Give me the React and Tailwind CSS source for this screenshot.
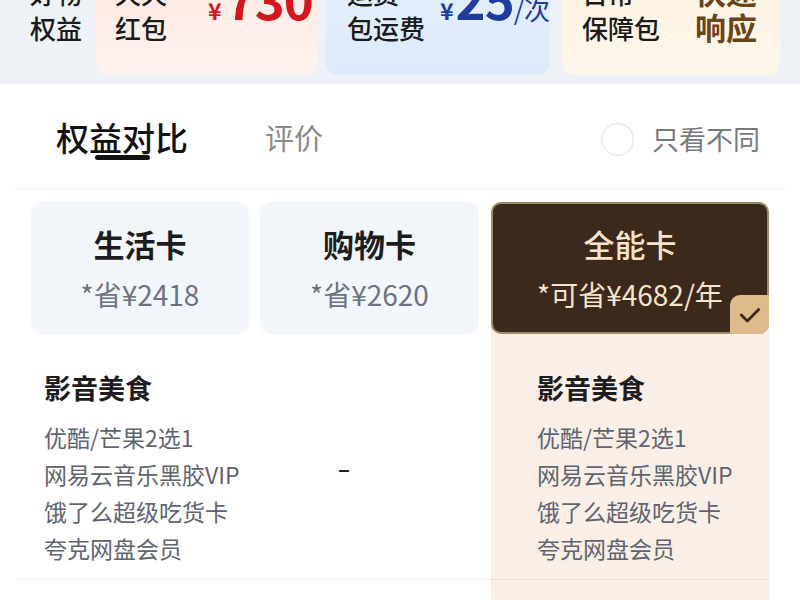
import React, { useState } from 'react';

const font = { fontFamily: '"Noto Sans CJK SC", "Noto Sans", sans-serif' };

const perks = ['优酷/芒果2选1', '网易云音乐黑胶VIP', '饿了么超级吃货卡', '夸克网盘会员'];

const cards = [
  { name: '生活卡', save: '*省¥2418' },
  { name: '购物卡', save: '*省¥2620' },
];

const Banner = () => {
  return (
    <div className="h-[84px] overflow-hidden bg-[#eef2f7]">
      <div className="-mt-[44px] flex h-[119px] items-start">
        <div className="ml-[30px] w-[66px] pt-[19px] text-[26px] font-medium leading-[35px] text-[#1b1b1b]">
          <div>好物</div>
          <div>权益</div>
        </div>
        <div className="flex h-[119px] w-[222px] items-start rounded-[12px] bg-gradient-to-b from-[#fde6e0] to-[#fff3ee] pl-[19px]">
          <div className="w-[93px] pt-[19px] text-[26px] font-medium leading-[35px] text-[#1b1b1b]">
            <div>天天</div>
            <div>红包</div>
          </div>
          <div className="flex items-baseline whitespace-nowrap pt-[12px] font-bold text-[#d3161e]">
            <span className="text-[23px]">¥</span>
            <span className="ml-[4px] text-[51px] leading-[60px] tracking-[-1px]">730</span>
          </div>
        </div>
        <div className="ml-[8px] flex h-[119px] w-[224px] items-start rounded-[12px] bg-gradient-to-b from-[#e6f0fd] to-[#ddeafb] pl-[21px]">
          <div className="w-[96px] pt-[19px] text-[26px] font-medium leading-[35px] text-[#1b1b1b]">
            <div>运费</div>
            <div>包运费</div>
          </div>
          <div className="flex items-baseline whitespace-nowrap pt-[12px] text-[#1d3c9c]">
            <span className="text-[23px] font-bold">¥</span>
            <span className="ml-[2px] text-[51px] font-bold leading-[60px] tracking-[-1px]">25</span>
            <span className="text-[26px]">/次</span>
          </div>
        </div>
        <div className="ml-[12px] flex h-[119px] w-[218px] items-start rounded-[12px] bg-gradient-to-b from-[#fdf3e2] to-[#fef6ea] pl-[20px]">
          <div className="w-[113px] pt-[19px] text-[26px] font-medium leading-[35px] text-[#1b1b1b]">
            <div>日常</div>
            <div>保障包</div>
          </div>
          <div className="pt-[17px] text-[31px] font-bold leading-[36px] text-[#6a4318]">
            <div>快速</div>
            <div>响应</div>
          </div>
        </div>
      </div>
    </div>
  );
};

const Check = () => (
  <svg width="26" height="26" viewBox="0 0 24 24" fill="none">
    <path d="M4 12l5.5 5.5L20 7" stroke="#3b2a1b" strokeWidth="2.6" strokeLinecap="round" strokeLinejoin="round" />
  </svg>
);

const PerkList = () => (
  <>
    <div className="text-[27px] font-bold leading-[36px] text-[#1d1d1f]">影音美食</div>
    <div className="mt-[13px] text-[23px] leading-[37px] text-[#5f6470]">
      {perks.map((p) => (
        <div key={p}>{p}</div>
      ))}
    </div>
  </>
);

export default function App() {
  const [onlyDiff, setOnlyDiff] = useState(false);

  return (
    <div className="min-h-[600px] w-[800px] overflow-hidden bg-white" style={font}>
      <Banner />

      <div className="mt-[2px] flex items-end px-[56px] pt-[33px]">
        <div className="flex flex-col items-center">
          <span className="text-[33px] font-medium leading-[36px] text-[#111]">权益对比</span>
          <span className="h-[5px] w-[55px] rounded-full bg-[#111]" />
        </div>
        <span className="mb-[5px] ml-[77px] text-[29px] leading-[36px] text-[#8a8a8a]">评价</span>
        <button
          onClick={() => setOnlyDiff(!onlyDiff)}
          className="mb-[3px] ml-auto mr-[-16px] flex items-center gap-[18px]"
        >
          <span className="h-[33px] w-[33px] rounded-full border-[1.5px] border-[#dcdcdc]" />
          <span className="text-[27px] leading-[36px] text-[#7a7a7a]">只看不同</span>
        </button>
      </div>

      <div className="mx-[15px] mt-[28px] h-px bg-[#f0f0f0]" />

      <div className="mt-[13px] grid grid-cols-[242px_231px_278px] pl-[18px]">
        {cards.map((c, i) => (
          <div key={c.name} className={i === 0 ? 'pl-[13px] pr-[11px]' : 'pr-[12px]'}>
            <div className="flex h-[132px] flex-col items-center rounded-[12px] bg-[#f2f5f9] pt-[22px]">
              <div className="text-[31px] font-bold leading-[40px] text-[#1d1d1f]">{c.name}</div>
              <div className="mt-[12px] text-[28px] leading-[36px] text-[#6b7380]">{c.save}</div>
            </div>
          </div>
        ))}
        <div className="rounded-t-[10px] bg-[#f9efe6]">
          <div className="relative flex h-[132px] flex-col items-center rounded-[10px] border-2 border-[#a08a6c] bg-[#3b2a1b] pt-[20px]">
            <div className="text-[31px] font-medium leading-[40px] text-[#f6e4cb]">全能卡</div>
            <div className="mt-[12px] whitespace-nowrap text-[28px] leading-[36px] text-[#f6e4cb]">*可省¥4682/年</div>
            <div className="absolute bottom-[-2px] right-[-2px] flex h-[39px] w-[39px] items-center justify-center rounded-br-[10px] rounded-tl-[10px] bg-[#dfbb8c]">
              <Check />
            </div>
          </div>
        </div>

        <div className="border-b border-[#efefef] pb-[12px] pl-[26px] pt-[36px]">
          <PerkList />
        </div>
        <div className="border-b border-[#efefef] pl-[78px] pt-[118px]">
          <span className="text-[22px] font-bold leading-[30px] text-[#222]">–</span>
        </div>
        <div className="border-b border-[#efe3d6] bg-[#f9efe6] pb-[12px] pl-[46px] pt-[36px]">
          <PerkList />
        </div>
        <div className="h-[40px]" />
        <div />
        <div className="bg-[#f9efe6]" />
      </div>
    </div>
  );
}
